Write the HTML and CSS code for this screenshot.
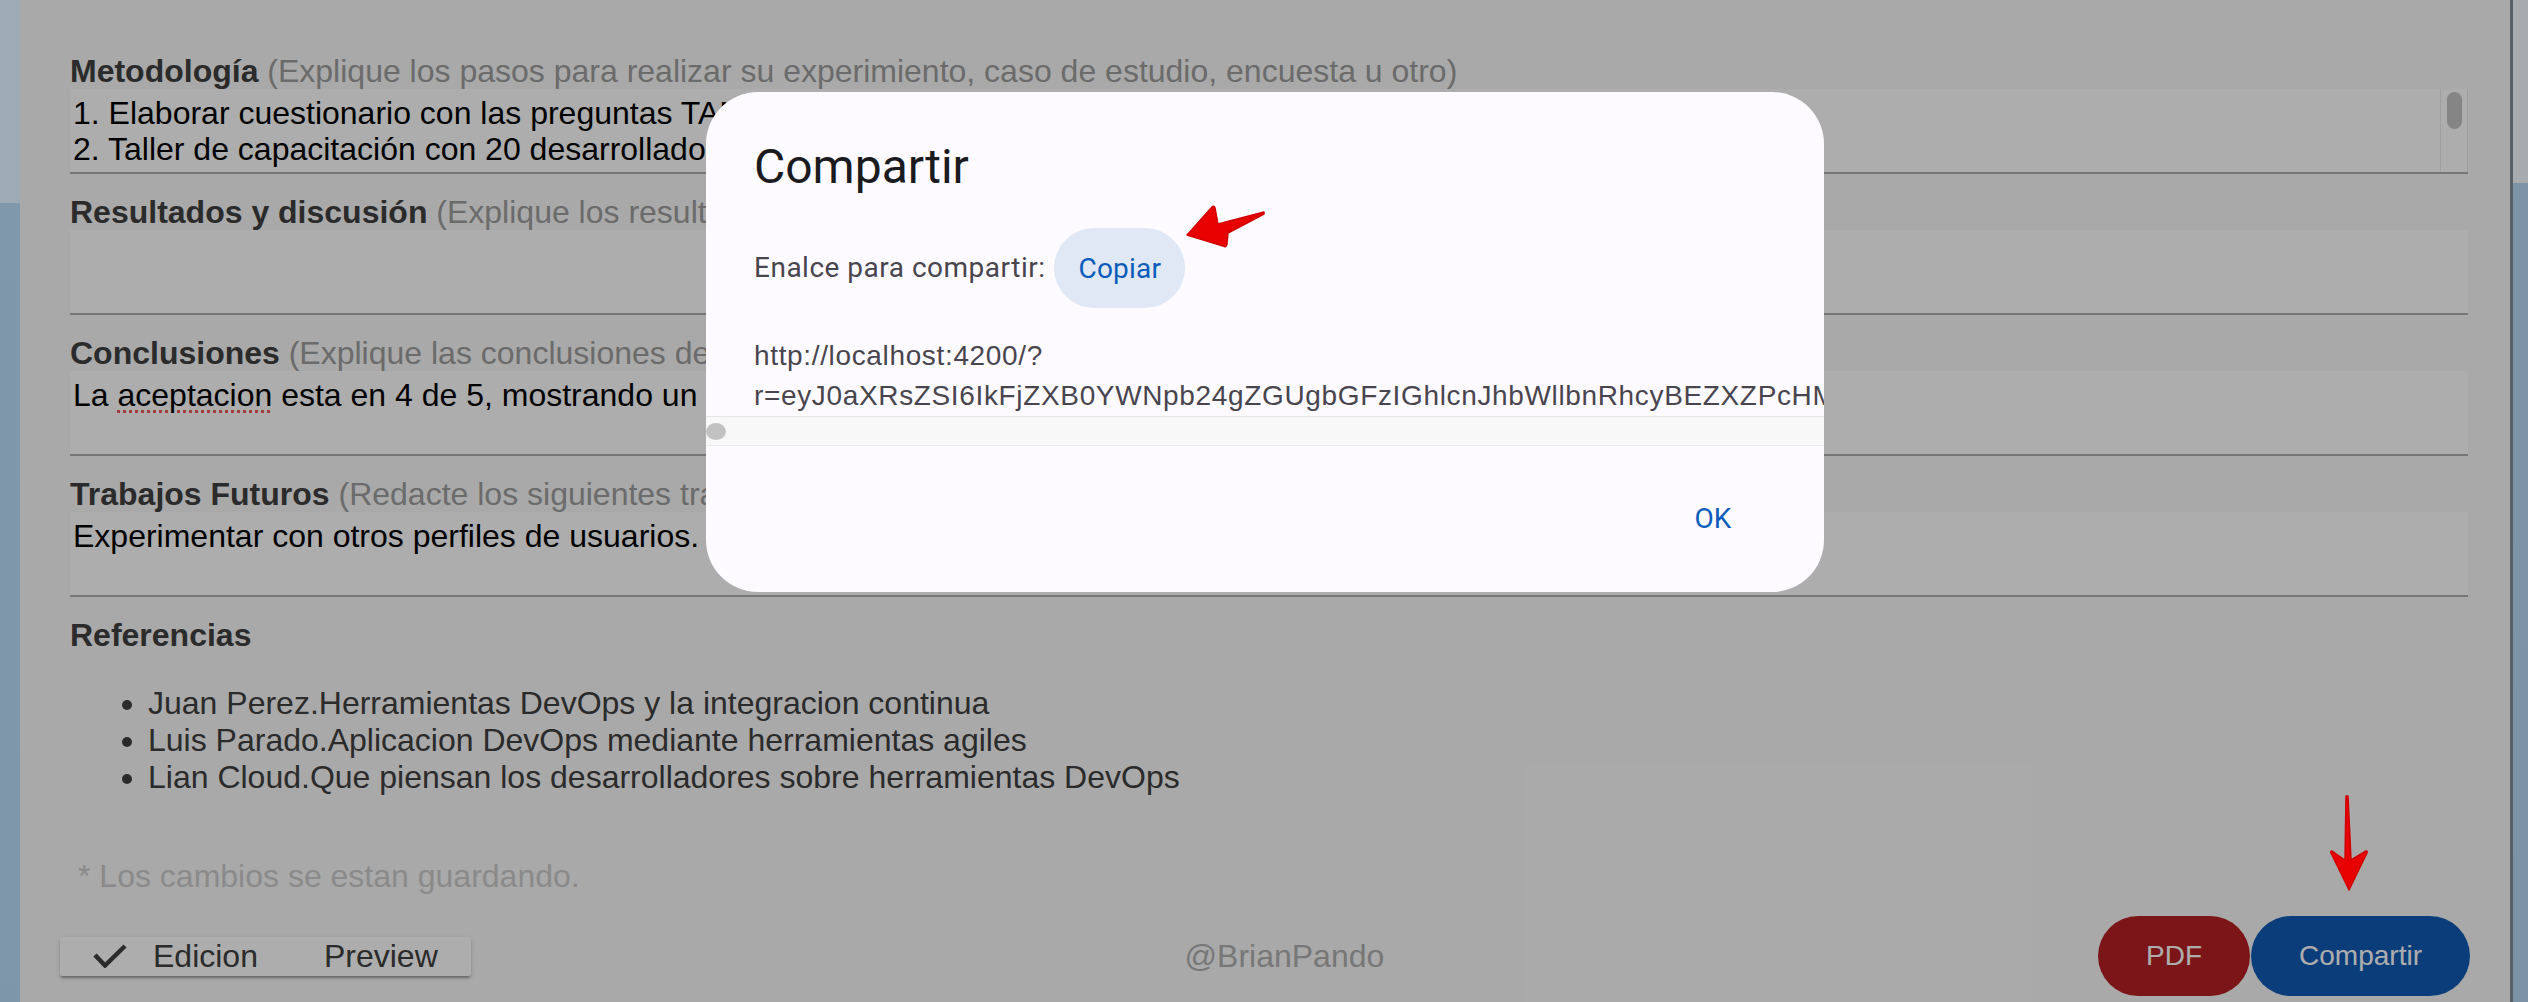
FILE: index.html
```html
<!DOCTYPE html>
<html lang="es">
<head>
<meta charset="utf-8">
<title>Compartir</title>
<link rel="stylesheet" href="styles.css">
</head>
<body>
<div class="desk desk-left"></div>
<div class="window">
  <main class="page">
    <section class="doc">
      <div class="section">
        <h3 class="section-title">Metodología <span class="hint">(Explique los pasos para realizar su experimiento, caso de estudio, encuesta u otro)</span></h3>
        <div class="field field-scroll">
          <div class="field-text">1. Elaborar cuestionario con las preguntas TAM.<br>2. Taller de capacitación con 20 desarrolladores.</div>
          <div class="vscroll"><div class="vscroll-thumb"></div></div>
        </div>
      </div>
      <div class="section">
        <h3 class="section-title">Resultados y discusión <span class="hint">(Explique los resultados obtenidos)</span></h3>
        <div class="field"></div>
      </div>
      <div class="section">
        <h3 class="section-title">Conclusiones <span class="hint">(Explique las conclusiones de su trabajo)</span></h3>
        <div class="field">La <span class="misspelled">aceptacion</span> esta en 4 de 5, mostrando un buen nivel.</div>
      </div>
      <div class="section">
        <h3 class="section-title">Trabajos Futuros <span class="hint">(Redacte los siguientes trabajos)</span></h3>
        <div class="field">Experimentar con otros perfiles de usuarios.</div>
      </div>
      <div class="section">
        <h3 class="section-title">Referencias</h3>
        <ul class="refs">
          <li>Juan Perez.Herramientas DevOps y la integracion continua</li>
          <li>Luis Parado.Aplicacion DevOps mediante herramientas agiles</li>
          <li>Lian Cloud.Que piensan los desarrolladores sobre herramientas DevOps</li>
        </ul>
      </div>
      <p class="saving">* Los cambios se estan guardando.</p>
    </section>
    <footer class="bottom-bar">
      <div class="toggle-group">
        <button class="toggle toggle-checked"><svg class="check" viewBox="0 0 34 24" width="34" height="24"><polyline points="2,11 12,21.5 32,2" /></svg>Edicion</button>
        <button class="toggle">Preview</button>
      </div>
      <span class="author">@BrianPando</span>
      <div class="bar-actions">
        <button class="pill pill-red">PDF</button>
        <button class="pill pill-blue">Compartir</button>
      </div>
    </footer>
  </main>

  <div class="backdrop">
    <div class="dialog">
      <h2 class="dialog-title">Compartir</h2>
      <div class="dialog-content">
        <div class="share-row">
          <span>Enalce para compartir:</span>
          <button class="btn-tonal">Copiar</button>
        </div>
        <div class="share-url">http://localhost:4200/?<wbr>r=eyJ0aXRsZSI6IkFjZXB0YWNpb24gZGUgbGFzIGhlcnJhbWllbnRhcyBEZXZPcHMiLCJtZXRvZG9sb2dpYSI6IjEuIEVsYWJvcmFy</div>
      </div>
      <div class="hscroll"><div class="hscroll-thumb"></div></div>
      <div class="dialog-actions">
        <button class="btn-text">OK</button>
      </div>
    </div>
  </div>

  <svg class="arrow arrow-copy" viewBox="0 0 82 46" width="82" height="46">
    <path d="M2 31 L27 3 Q29 1 30 4 L33 20 L79 8 L79 10 L43 29 L42 40 Q41 44 38 42 Z" />
  </svg>
  <svg class="arrow arrow-share" viewBox="0 0 46 98" width="46" height="98">
    <path d="M20 2 L22 2 L25 66 L40 57 Q42 57 41 59 L23 96 L5 59 Q4 57 6 57 L19 66 Z" />
  </svg>
</div>
<div class="desk desk-right"></div>
</body>
</html>
```
FILE: styles.css
```css
html, body {
  margin: 0;
  height: 100%;
}

body {
  display: flex;
  overflow: hidden;
  font-family: "Liberation Sans", Arial, sans-serif;
}

.desk {
  flex: none;
  height: 100%;
}

.desk-left {
  width: 20px;
  background: linear-gradient(to bottom, #9eaab4 0, #9eaab4 203px, #7f98ac 203px, #7d96aa 100%);
}

.desk-right {
  width: 15px;
  border-left: 3px solid #56616a;
  background: linear-gradient(to bottom, #a7abae 0, #a7abae 183px, #7d94a8 183px, #7c93a7 100%);
}

.window {
  position: relative;
  flex: 1;
  height: 100%;
}

.page {
  box-sizing: border-box;
  height: 100%;
  display: flex;
  flex-direction: column;
  padding-top: 53px;
  background: #fafafa;
  font-size: 32px;
}

.doc {
  padding: 0 42px 0 50px;
}

.section + .section {
  margin-top: 20px;
}

.section-title {
  margin: 0;
  font-size: 32px;
  line-height: 36px;
  font-weight: bold;
  color: #404040;
  white-space: nowrap;
}

.hint {
  font-weight: normal;
  color: #9e9e9e;
}

.field {
  box-sizing: border-box;
  height: 85px;
  padding: 6px 3px;
  background: #ffffff;
  border-bottom: 2px solid #aeaeae;
  line-height: 36px;
  color: #000;
  overflow: hidden;
  white-space: nowrap;
}

.field-scroll {
  display: flex;
  padding: 0 0 0 3px;
}

.field-text {
  flex: 1;
  padding-top: 6px;
  overflow: hidden;
}

.vscroll {
  box-sizing: border-box;
  flex: none;
  width: 28px;
  border-left: 1px solid #ebebeb;
  border-right: 1px solid #ebebeb;
  padding: 3px 5px 0 6px;
}

.vscroll-thumb {
  height: 37px;
  border-radius: 8px;
  background: #c4c4c4;
}

.misspelled {
  text-decoration: underline dotted #f25a5a;
  text-decoration-thickness: 3px;
  text-underline-offset: 4px;
}

.refs {
  margin: 32px 0 0;
  padding-left: 78px;
  line-height: 37px;
  color: #404040;
}

.saving {
  margin: 62px 0 0;
  padding-left: 8px;
  line-height: 37px;
  color: #cccccc;
}

.bottom-bar {
  margin-top: auto;
  display: flex;
  justify-content: space-between;
  align-items: center;
  padding: 0 40px 6px 40px;
}

.toggle-group {
  display: flex;
  height: 39px;
  background: #ffffff;
  border-radius: 2px;
  box-shadow: 0 4px 2px -2px rgba(0, 0, 0, 0.2), 0 2px 2px rgba(0, 0, 0, 0.14), 0 2px 6px rgba(0, 0, 0, 0.12);
}

.toggle {
  display: flex;
  align-items: center;
  gap: 26px;
  padding: 0 33px;
  border: none;
  background: none;
  font-family: "Liberation Sans", Arial, sans-serif;
  font-size: 32px;
  line-height: 39px;
  color: #404040;
}

.check {
  display: block;
  fill: none;
  stroke: #404040;
  stroke-width: 4.5;
}

.author {
  font-size: 32px;
  color: #b0b0b0;
}

.bar-actions {
  display: flex;
  gap: 1px;
}

.pill {
  height: 80px;
  padding: 0 48px;
  border: none;
  border-radius: 40px;
  font-family: "Liberation Sans", Arial, sans-serif;
  font-size: 28px;
  color: #ffffff;
}

.pill-red {
  background: #b51f22;
}

.pill-blue {
  background: #125bb6;
}

/* dialog */
.backdrop {
  position: absolute;
  inset: 0;
  display: flex;
  justify-content: center;
  align-items: flex-start;
  padding-top: 92px;
  background: rgba(0, 0, 0, 0.32);
}

.dialog {
  width: 1118px;
  background: #fdfbff;
  border-radius: 52px;
  overflow: hidden;
  font-family: Roboto, "Liberation Sans", sans-serif;
}

.dialog-title {
  margin: 0;
  padding: 43px 48px 0;
  font-size: 48px;
  line-height: 64px;
  font-weight: 400;
  color: #1b1b1f;
}

.dialog-content {
  margin-top: 29px;
  padding: 0 48px;
  overflow: hidden;
  color: #49454f;
}

.hscroll {
  box-sizing: border-box;
  height: 30px;
  padding-top: 6px;
  background: #f8f8f8;
  border-top: 1px solid #e6e6e6;
  border-bottom: 1px solid #ececec;
}

.hscroll-thumb {
  width: 20px;
  height: 17px;
  border-radius: 10px / 8.5px;
  background: #c2c2c2;
}

.share-row {
  display: flex;
  align-items: center;
  gap: 9px;
  font-size: 28px;
  line-height: 40px;
  letter-spacing: 0.5px;
}

.btn-tonal {
  height: 80px;
  padding: 0 24px;
  border: none;
  border-radius: 40px;
  background: #e0e8f6;
  color: #0b5cba;
  font-family: Roboto, sans-serif;
  font-size: 28px;
  font-weight: 400;
  letter-spacing: 0.2px;
}

.share-url {
  margin-top: 28px;
  font-family: "Liberation Sans", Arial, sans-serif;
  font-size: 28px;
  line-height: 40px;
  letter-spacing: 0.65px;
}

.dialog-actions {
  display: flex;
  justify-content: flex-end;
  padding: 32px 47px 34px;
}

.btn-text {
  min-width: 128px;
  height: 80px;
  padding: 0 24px;
  border: none;
  border-radius: 40px;
  background: none;
  color: #0b5cba;
  font-family: Roboto, sans-serif;
  font-size: 28px;
  font-weight: 400;
}

/* annotation arrows */
.arrow {
  position: absolute;
  fill: #e80000;
  stroke: #d00000;
  stroke-width: 1.5;
  stroke-linejoin: round;
}

.arrow-copy {
  left: 1165px;
  top: 204px;
}

.arrow-share {
  left: 2306px;
  top: 794px;
}
```
